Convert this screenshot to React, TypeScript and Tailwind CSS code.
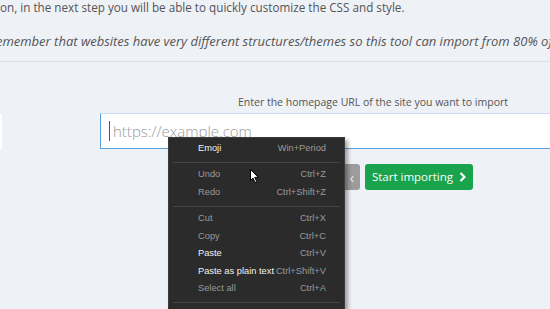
import React from "react";

const Row = ({ label, sc, on }: { label: string; sc: string; on?: boolean }) => (
  <div className="flex h-[17.5px] items-center justify-between whitespace-nowrap pl-[29px] pr-[18px]">
    <span className={on ? "text-[#f2f2f2]" : "text-[#9a9a9a]"}>{label}</span>
    <span className="text-[#9a9a9a]">{sc}</span>
  </div>
);

const Sep = () => (
  <div className="flex h-[9px] items-center px-[4px]">
    <div className="h-px w-full bg-[#454545]" />
  </div>
);

export default function App() {
  return (
    <div
      className="relative h-[309px] w-[550px] overflow-hidden bg-[#eef1f6] text-[#555]"
      style={{ fontFamily: '"Open Sans", sans-serif' }}
    >
      <div className="whitespace-nowrap text-[11.7px] leading-[15px] text-[#555]">
        on, in the next step you will be able to quickly customize the CSS and style.
      </div>
      <div className="-ml-[4px] mt-[19px] whitespace-nowrap text-[13px] italic leading-[15px] text-[#555]">
        emember that websites have very different structures/themes so this tool can import from 80% of
      </div>
      <div className="mt-[12px] h-px w-full bg-[#dcdfe4]" />

      <div className="mt-[33px] pl-[238px] text-[10.5px] leading-[14px] text-[#555]">
        Enter the homepage URL of the site you want to import
      </div>

      <div className="mt-[4px] flex h-[36px]">
        <div className="mt-[1px] h-[35px] w-[2px] bg-white" />
        <div className="ml-[98px] flex flex-1 items-center border-b border-l border-t border-b-[#5aa0da] border-l-[#5aa0da] border-t-[#c9dcef] bg-white pl-[8px]">
          <div className="h-[20px] w-px bg-[#555]" />
          <span className="ml-[3px] text-[15px] font-light text-[#9a9a9a]">https://example.com</span>
        </div>
      </div>

      <div className="mt-[15px] flex h-[26px] items-stretch">
        <div className="ml-[300px] flex w-[60px] items-center justify-end rounded-[3px] bg-[#9c9c9c] pr-[6px] text-[14px] text-[#eee]">
          ‹
        </div>
        <div className="ml-[5px] flex w-[108px] items-center justify-center gap-[6px] rounded-[3px] bg-[#18a34c] text-[11.5px] text-white">
          <span>Start importing</span>
          <svg width="7" height="10" viewBox="0 0 7 10">
            <path d="M1.5 1 L5.5 5 L1.5 9" stroke="white" strokeWidth="2.2" fill="none" />
          </svg>
        </div>
      </div>

      <div
        className="absolute left-[168px] top-[137px] w-[177px] border border-[#3c3c3c] bg-[#2b2b2b] pt-[2px] text-[9.3px] shadow-[3px_3px_4px_rgba(0,0,0,0.35)]"
        style={{ fontFamily: '"Liberation Sans", Arial, sans-serif' }}
      >
        <Row label="Emoji" sc="Win+Period" on />
        <Sep />
        <Row label="Undo" sc="Ctrl+Z" />
        <Row label="Redo" sc="Ctrl+Shift+Z" />
        <Sep />
        <Row label="Cut" sc="Ctrl+X" />
        <Row label="Copy" sc="Ctrl+C" />
        <Row label="Paste" sc="Ctrl+V" on />
        <Row label="Paste as plain text" sc="Ctrl+Shift+V" on />
        <Row label="Select all" sc="Ctrl+A" />
        <Sep />
        <div className="h-[20px]" />
      </div>

      <svg className="absolute left-[250px] top-[169px]" width="10" height="15" viewBox="0 0 10 15">
        <path d="M0.5 0.5 L0.5 11.5 L3 9 L5 13.5 L6.8 12.7 L4.8 8.4 L8.3 8.4 Z" fill="white" stroke="black" strokeWidth="1" />
      </svg>
    </div>
  );
}
